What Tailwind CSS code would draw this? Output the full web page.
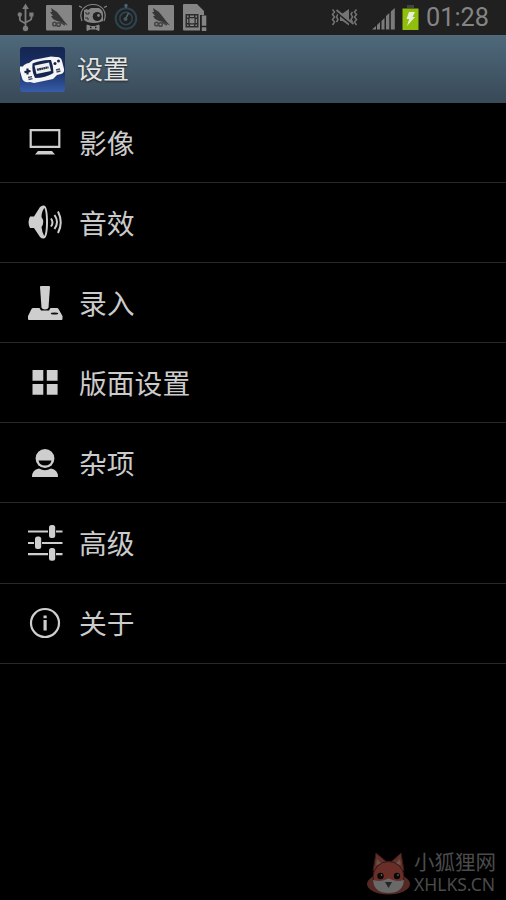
<!DOCTYPE html>
<html lang="zh-CN">
<head>
<meta charset="utf-8">
<title>设置</title>
<script src="https://cdn.jsdelivr.net/npm/@tailwindcss/browser@4"></script>
</head>
<body class="bg-black">
<div class="relative flex h-[900px] w-[506px] flex-col overflow-hidden bg-black font-['Roboto','Noto_Sans_CJK_SC',sans-serif]">
  <header class="flex h-[35px] shrink-0 items-center justify-between bg-[#202020] pr-[17px] pl-4">
    <div class="flex items-center">
      <!-- USB -->
      <svg class="mr-[11px] h-[35px] w-[19px]" viewBox="0 0 19 35" fill="none" stroke="#7c7c7c" stroke-width="1.8">
        <path d="M9.5 8v20M3.8 15v4q0 2 2 2.500l3.700 2M15.500 14v4q0 2-2 2.500l-4 2"/>
        <path d="M9.500 3.500l3.300 5.500H6.200z" fill="#7c7c7c" stroke="none"/>
        <circle cx="9.500" cy="28.500" r="2.700" fill="#7c7c7c" stroke="none"/><circle cx="3.800" cy="14.500" r="2.200" fill="#7c7c7c" stroke="none"/><path d="M13.300 12.500h4.200v4h-4.200z" fill="#7c7c7c" stroke="none"/>
      </svg>
      <svg class="mr-[7px] h-[35px] w-[26px]" viewBox="0 0 26 35">
        <rect y="5" width="26" height="25.500" rx="1" fill="#858585"/>
        <path d="M5 8l6 4 4 5 3 4 4 4.500-4-2-3-1.500-4-1-4-2-2-3h2l-3-4h2z" fill="#363636"/>
        <g fill="none" stroke="#444" stroke-width="1.500"><circle cx="8.500" cy="24" r="1.800"/><circle cx="12.500" cy="24.500" r="1.800"/><path d="M14 22l5 3"/></g>
      </svg>
      <svg class="mr-[7px] h-[35px] w-[28px]" viewBox="0 0 28 35" fill="none" stroke="#858585">
        <path d="M3 21C-1 11 6 4.500 14 4.500S29 11 25 21M0 6l3 1.500M28 6l-3 1.500" stroke-width="1.200"/>
        <path d="M5 10l3-1 1 1 3-2h8q4 2 4 6v7q-4 2-9 2-7 0-10-3z" fill="#858585" stroke="none"/>
        <circle cx="18.200" cy="16.500" r="4.500" fill="#222" stroke="none"/><circle cx="19.500" cy="15.500" r="1.400" fill="#858585" stroke="none"/>
        <path d="M7 12v2h3v-2M6 18h3v2" stroke="#333"/>
        <path d="M8 25l4 1.500h4l4-1.500v5.500l-3.500-1.500h-5L8 30.500z" fill="#858585" stroke-width="1"/><path d="M11 27.500h1.500M16 27.500h1.500" stroke="#222" stroke-width="1.500"/>
      </svg>
      <svg class="mr-[9px] h-[35px] w-[25px]" viewBox="0 0 25 35" fill="none">
        <circle cx="12" cy="18.500" r="10.300" stroke="#2c4350" stroke-width="2"/>
        <circle cx="12" cy="18.500" r="6.200" stroke="#304653" stroke-width="1.500"/>
        <path d="M12 5v3M14.500 13l-3 6" stroke="#4a6673" stroke-width="1.600"/><circle cx="12" cy="5.500" r="1.700" fill="#4d6572"/><circle cx="11.500" cy="19" r="2" fill="#3d5966"/>
      </svg>
      <svg class="mr-[9px] h-[35px] w-[26px]" viewBox="0 0 26 35">
        <rect y="5" width="26" height="25.500" rx="1" fill="#858585"/>
        <path d="M5 8l6 4 4 5 3 4 4 4.500-4-2-3-1.500-4-1-4-2-2-3h2l-3-4h2z" fill="#363636"/>
        <g fill="none" stroke="#444" stroke-width="1.500"><circle cx="8.500" cy="24" r="1.800"/><circle cx="12.500" cy="24.500" r="1.800"/><path d="M14 22l5 3"/></g>
      </svg>
      <svg class="h-[35px] w-[25px]" viewBox="0 0 25 35">
        <path d="M0 5q0-1 1-1h13l7 7v4h-4v15.500H1q-1 0-1-1z" fill="#858585"/>
        <path d="M2.500 14h13v13.500h-13z" fill="#2b2b2b"/><path d="M4 15.500h1.500v2H4zM7 15.500h4v1.500H7zM12.500 15.500h1.500v2h-1.500zM4 19h1.200v4H4zM12.800 19h1.200v4h-1.200zM4 24.500h1.500v1.500H4zM7 24.500h4v1.500H7zM12.500 24.500h1.500v1.500h-1.500zM6.500 18.300h5v5h-5z" fill="#858585"/>
        <path d="M18.800 15.500h4.500v10.300h-4.500zM18.800 27.300h4.500V31h-4.500z" fill="#858585"/>
      </svg>
    </div>
    <div class="flex items-center">
      <svg class="mr-[14px] h-[35px] w-[27px]" viewBox="0 0 27 35" fill="none" stroke="#757575" stroke-width="1.500">
        <path d="M1.500 9.500l2 2.500-2 2.500 2 2.500-2 2.500 2 2.500-2 3M5.500 12l1.500 2-1.500 3 1.500 2.500-1.500 2.500M25.500 9.500l-2 2.500 2 2.500-2 2.500 2 2.500-2 2.500 2 3M21.500 12L20 14l1.500 3-1.500 2.500 1.500 2.500"/>
        <path d="M9 13.500h2.500L18 9v16.500L11.500 21H9z" fill="#757575" stroke="none"/>
        <path d="M5 11.800l17 14" stroke="#202020" stroke-width="1.500"/><path d="M5.500 10l17 14" stroke-width="1.800"/>
      </svg>
      <svg class="mr-[7px] h-[35px] w-[23px]" viewBox="0 0 23 35" fill="#7b7b7b"><path d="M0 29.500l4-3.500v3.500zM5 25l3-3v7.500H5zM9.500 21l3-3v11.500h-3zM14 16l3.300-3v16.500H14zM18.800 11.500l4-3.500v21.500h-4z"/></svg>
      <svg class="mr-[7px] h-[35px] w-[17px]" viewBox="0 0 17 35"><path d="M5 5h7v3H5z" fill="#424242"/><path d="M.5 8.500h16V30H.5z" fill="#91bf0d"/><path d="M7 12h6l-2.500 5H13L5 26l2.200-7H4.500z" fill="#e6eed6"/></svg>
      <span class="w-[63px] text-[25.300px] leading-[35px] whitespace-nowrap text-[#858585]">01:28</span>
    </div>
  </header>

  <div class="flex h-[68px] shrink-0 items-center border-t border-[#526a7b] bg-linear-to-b from-[#4e697b] to-[#384957] pl-5">
    <svg class="mr-3 h-[45px] w-[45px]" viewBox="0 0 45 45">
      <defs><linearGradient id="tile" x2="0" y2="1"><stop stop-color="#142550"/><stop offset=".55" stop-color="#1a3269"/><stop offset="1" stop-color="#385daa"/></linearGradient></defs>
      <rect width="45" height="45" rx="3" fill="url(#tile)"/>
      <path d="M3 19.500Q4 17 9 16l4-3 18-3.500 5 .5q5-.5 6 4l2 8q.5 4-3 5l-4 1-4 4-19 4-4-1q-7 1-8-4l-2-7q-.7-3 0-4.500z" fill="#f5f5f5"/>
      <path d="M12.500 16.500q9-4 18.500-3.500 2.500 6 2.500 13-8 5-18.500 5-3.500-7-2.500-14.500z" fill="#15264e"/>
      <path d="M14.500 18.500L29 15.500l2 8.500-14.500 3z" fill="#f0f0f0"/><path d="M17 22.800l11.500-2.500" stroke="#222c42" stroke-width="2.200" stroke-dasharray="1.900 .3"/>
      <path d="M7.500 21.500v6M4.500 25.200l6-1.200" stroke="#172246" stroke-width="2.200"/><circle cx="35" cy="16.500" r="1.500" fill="#172246"/><circle cx="38.500" cy="14" r="1.500" fill="#172246"/><path d="M8 30.500l4-.8M8.500 32.500l4-.8M36 23l4-1M36.500 25l4-1" stroke="#3d4660" stroke-width="1.300"/>
    </svg>
    <h1 class="text-[26px] leading-[38px] font-normal text-[#e4e4e4] [text-shadow:0_1px_2px_#222]">设置</h1>
  </div>

  <nav class="flex flex-col text-[27.800px] font-normal text-[#cbcbcb]">
    <a class="flex h-[80.1px] items-center border-b border-[#292929] pl-[27px]">
      <svg class="mr-4 mb-px h-9 w-9" viewBox="0 0 36 36"><path d="M3.700 6.200h28.600v16.600H3.700z" fill="none" stroke="#cecece" stroke-width="2.200"/><path d="M11 27h14l3 3.500H8z" fill="#cecece"/></svg><span class="pt-1">影像</span>
    </a>
    <a class="flex h-[80.1px] items-center border-b border-[#292929] pl-[27px]">
      <svg class="mr-4 mb-0.5 h-9 w-9" viewBox="0 0 36 36"><path d="M3 12.500h4L13 3q2-2 4-1.500c3 .5 4 8 4 16.500s-1 16-4 16.500q-2 .5-4-1.500L7 24H3q-3-5.500 0-11.500z" fill="#cecece"/><path d="M17.200 4c-2 3-2.700 6-2.700 9q3.500 5 0 10 .5 5 2.700 9c2.500-2 2.500-26 0-28z" fill="#000"/><path d="M24 14.500q3 4 0 8M27.500 11q5 7 0 14M31 7.500q5.500 11 0 21.500" fill="none" stroke="#cecece" stroke-width="2"/></svg><span class="pt-1">音效</span>
    </a>
    <a class="flex h-[80.1px] items-center border-b border-[#292929] pl-[27px]">
      <svg class="mr-4 mb-0.5 h-9 w-9" viewBox="0 0 36 36"><path d="M6 24h6.500l1.500 2.500h8l1.500-2.500H30q1 0 1.500 1l4 7v3q0 1-1 1H2q-1 0-1-1v-3l3.500-7q.5-1 1.500-1z" fill="#cecece"/><path d="M13 3q0-1 1-1h8q1 0 1 1l-1.500 20.500q-.5 2-3.500 2t-3.500-2z" fill="#cecece"/><ellipse cx="27.500" cy="29.500" rx="3.700" ry="1.100" fill="#111"/></svg><span class="pt-1">录入</span>
    </a>
    <a class="flex h-[80.1px] items-center border-b border-[#292929] pl-[27px]">
      <svg class="mr-4 mb-0.5 h-9 w-9" viewBox="0 0 36 36" fill="#cecece"><path d="M5.500 6h10.800v10.800H5.500zM19.800 6h10.800v10.800H19.800zM5.500 20h10.800v10.800H5.500zM19.800 20h10.800v10.800H19.800z"/></svg><span class="pt-1">版面设置</span>
    </a>
    <a class="flex h-[80.1px] items-center border-b border-[#292929] pl-[27px]">
      <svg class="mr-4 h-9 w-9" viewBox="0 0 36 36"><circle cx="18" cy="13.500" r="9.400" fill="#cecece"/><path d="M11.500 15.500h13q-1 5-6.500 5T11.500 15.500z" fill="#000"/><path d="M5 32q0-7.500 7-8.500 6 3.500 12 0 7 1 7 8.500z" fill="#cecece"/></svg><span class="pt-1">杂项</span>
    </a>
    <a class="flex h-[80.1px] items-center border-b border-[#292929] pl-[27px]">
      <svg class="mr-4 h-9 w-9" viewBox="0 0 36 36"><path d="M1 6.500h20M29 6.500h6.500M1 18h6M15 18h20.500M1 29.200h20M29 29.200h6.500" stroke="#cecece" stroke-width="2.200"/><g fill="#cecece"><rect x="22" y="0" width="6.200" height="13" rx="2.500"/><rect x="8" y="11.500" width="6.200" height="12.500" rx="2.500"/><rect x="22" y="23" width="6.200" height="12.800" rx="2.500"/></g></svg><span class="pt-1">高级</span>
    </a>
    <a class="flex h-[80.1px] items-center border-b border-[#292929] pl-[27px]">
      <svg class="mr-4 h-9 w-9" viewBox="0 0 36 36"><circle cx="18" cy="18" r="14" fill="none" stroke="#cecece" stroke-width="2.200"/><path d="M16.500 15h3.200v10.500h-3.200zM16.500 10.500h3.200v2.800h-3.200z" fill="#cecece"/></svg><span class="pt-1">关于</span>
    </a>
  </nav>

  <div class="mt-auto flex h-[53px] items-start pl-[366px]">
    <svg class="mr-1 h-12 w-11" viewBox="0 0 44 48">
      <ellipse cx="22.500" cy="37" rx="21.500" ry="10.500" fill="#542923"/>
      <path d="M7 24L10 6l12 10M38 24L35 6 24 16" fill="#642e29" stroke="#371a17"/>
      <path d="M10 18l1-6 5 5M35 18l-1-6-5 5" fill="#655248"/>
      <circle cx="22.500" cy="30" r="15.500" fill="#692e28" stroke="#321815"/>
      <path d="M7 33q8 2 13-.5 2.500-2 5 0 6 2.500 13 .5-1 13-15.500 13T7 33z" fill="#696969"/>
      <circle cx="14.500" cy="29" r="3.200" fill="#080808"/><circle cx="31" cy="29" r="3.200" fill="#080808"/><circle cx="15.500" cy="28" r=".8" fill="#888"/><circle cx="32" cy="28" r=".8" fill="#888"/>
      <path d="M19 35h7l-3.500 6z" fill="#252525"/>
    </svg>
    <div class="flex flex-col pt-1 text-[#4b4b4b]">
      <span class="text-[20.500px] leading-[24px] whitespace-nowrap">小狐狸网</span>
      <span class="font-['Noto_Sans'] text-[17.500px] leading-[18px] whitespace-nowrap">XHLKS.CN</span>
    </div>
  </div>
</div>
</body>
</html>
